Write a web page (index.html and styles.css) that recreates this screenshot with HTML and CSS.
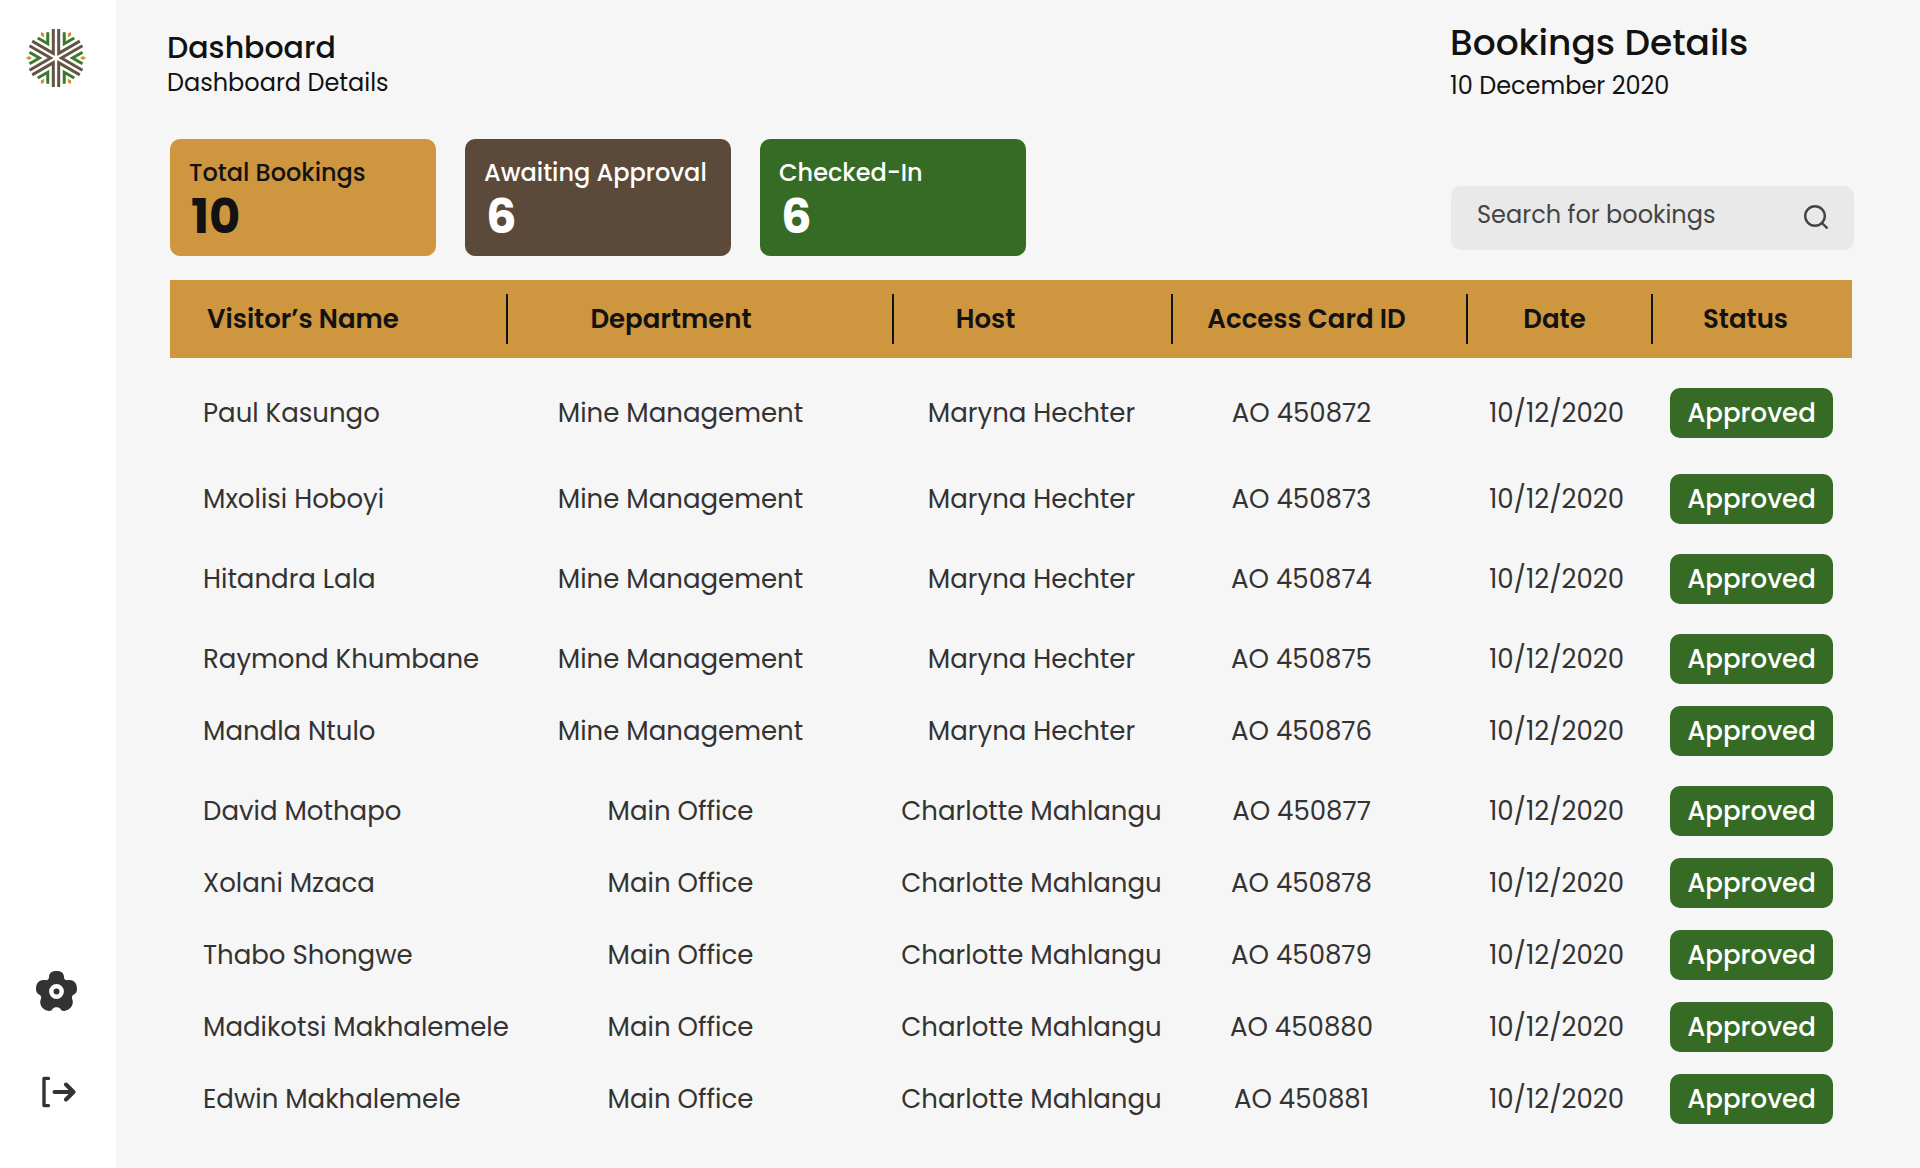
FILE: index.html
```html
<!DOCTYPE html>
<html lang="en">
<head>
<meta charset="utf-8">
<meta name="viewport" content="width=device-width, initial-scale=1">
<title>Bookings Dashboard</title>
<link rel="stylesheet" href="styles.css">
</head>
<body>
<div class="app">
  <nav class="sidebar" aria-label="Main">
    <a class="side-link" href="#home" aria-label="Home">
      <svg width="62" height="62" viewBox="-31 -31 62 62" fill="none" stroke-width="3">
        <defs>
          <g id="sector">
            <path stroke="#655344" d="M26.5-12.2 5.4 0 26.5 12.2"/>
            <path stroke="#3a7a2a" d="M26.5-5.8 16.5 0 26.5 5.8"/>
            <path fill="#d0933a" d="M24 0 27-2 30 0 27 2z"/>
          </g>
        </defs>
        <use href="#sector"/>
        <use href="#sector" transform="rotate(60)"/>
        <use href="#sector" transform="rotate(120)"/>
        <use href="#sector" transform="rotate(180)"/>
        <use href="#sector" transform="rotate(240)"/>
        <use href="#sector" transform="rotate(300)"/>
      </svg>
    </a>
    <div class="side-bottom">
      <a class="side-link" href="#settings" aria-label="Settings">
        <svg width="41" height="40" viewBox="0 0 41 40">
          <path fill="#333" d="M13 6.500C13 1.500 16 0 20.500 0S28 1.500 28 6.500C28.300 9 30 9.600 32.500 9.100C37.500 8.200 41 12 41 18C41 21.500 39.500 22.700 37.500 23.700C35.500 25 35.500 27 36.500 29C38 34 34 39.500 28 40C26 40 25 39 24.500 38C23 35.500 18 35.500 16.500 38C16 39 15 40 13 40C7 39.500 3 34 4.500 29C5.500 27 5.500 25 3.500 23.700C1.500 22.700 0 21.500 0 18C0 12 3.500 8.200 8.500 9.100C11 9.600 12.700 9 13 6.500z"/>
          <circle cx="20.500" cy="20.500" r="5.200" fill="#333" stroke="#fff" stroke-width="4.400"/>
        </svg>
      </a>
      <a class="side-link" href="#logout" aria-label="Log out">
        <svg width="40" height="32" viewBox="-6 0 40 32" fill="none" stroke="#333" stroke-linecap="round" stroke-linejoin="round">
          <path stroke-width="3.400" d="M6.500 2.400H2V29.600H6.500"/>
          <path stroke-width="4" d="M12.500 16H31M24 8.500 31.500 16 24 23.500"/>
        </svg>
      </a>
    </div>
  </nav>

  <main class="main">
    <header class="top">
      <div class="titles">
        <h1 class="title">Dashboard</h1>
        <p class="subtitle">Dashboard Details</p>
      </div>
      <div class="details">
        <h2 class="details-title">Bookings Details</h2>
        <p class="details-date">10 December 2020</p>
      </div>
      <div class="cards">
        <section class="card card-gold"><h3 class="card-label">Total Bookings</h3><p class="card-value">10</p></section>
        <section class="card card-brown"><h3 class="card-label">Awaiting Approval</h3><p class="card-value">6</p></section>
        <section class="card card-green"><h3 class="card-label">Checked-In</h3><p class="card-value">6</p></section>
      </div>
      <form class="search">
        <input class="search-input" type="search" placeholder="Search for bookings" aria-label="Search for bookings">
        <button class="search-button" type="submit" aria-label="Search">
          <svg width="24" height="24" viewBox="0 0 24 24" fill="none" stroke="#444" stroke-width="2.400"><circle cx="11" cy="11" r="9.800"/><path d="M18 18 23.500 23.500"/></svg>
        </button>
      </form>
    </header>

    <table class="bookings">
      <colgroup><col class="c-name"><col class="c-dept"><col class="c-host"><col class="c-card"><col class="c-date"><col class="c-status"></colgroup>
      <thead>
        <tr><th scope="col" class="name">Visitor’s Name</th><th scope="col" class="dept">Department</th><th scope="col" class="host">Host</th><th scope="col" class="card-id">Access Card ID</th><th scope="col" class="date">Date</th><th scope="col" class="status">Status</th></tr>
      </thead>
      <tbody>
        <tr class="lead"><td class="name">Paul Kasungo</td><td class="dept">Mine Management</td><td class="host">Maryna Hechter</td><td class="card-id">AO 450872</td><td class="date">10/12/2020</td><td class="status"><span class="pill">Approved</span></td></tr>
        <tr class="loose"><td class="name">Mxolisi Hoboyi</td><td class="dept">Mine Management</td><td class="host">Maryna Hechter</td><td class="card-id">AO 450873</td><td class="date">10/12/2020</td><td class="status"><span class="pill">Approved</span></td></tr>
        <tr class="loose"><td class="name">Hitandra Lala</td><td class="dept">Mine Management</td><td class="host">Maryna Hechter</td><td class="card-id">AO 450874</td><td class="date">10/12/2020</td><td class="status"><span class="pill">Approved</span></td></tr>
        <tr><td class="name">Raymond Khumbane</td><td class="dept">Mine Management</td><td class="host">Maryna Hechter</td><td class="card-id">AO 450875</td><td class="date">10/12/2020</td><td class="status"><span class="pill">Approved</span></td></tr>
        <tr class="loose"><td class="name">Mandla Ntulo</td><td class="dept">Mine Management</td><td class="host">Maryna Hechter</td><td class="card-id">AO 450876</td><td class="date">10/12/2020</td><td class="status"><span class="pill">Approved</span></td></tr>
        <tr><td class="name">David Mothapo</td><td class="dept">Main Office</td><td class="host">Charlotte Mahlangu</td><td class="card-id">AO 450877</td><td class="date">10/12/2020</td><td class="status"><span class="pill">Approved</span></td></tr>
        <tr><td class="name">Xolani Mzaca</td><td class="dept">Main Office</td><td class="host">Charlotte Mahlangu</td><td class="card-id">AO 450878</td><td class="date">10/12/2020</td><td class="status"><span class="pill">Approved</span></td></tr>
        <tr><td class="name">Thabo Shongwe</td><td class="dept">Main Office</td><td class="host">Charlotte Mahlangu</td><td class="card-id">AO 450879</td><td class="date">10/12/2020</td><td class="status"><span class="pill">Approved</span></td></tr>
        <tr><td class="name">Madikotsi Makhalemele</td><td class="dept">Main Office</td><td class="host">Charlotte Mahlangu</td><td class="card-id">AO 450880</td><td class="date">10/12/2020</td><td class="status"><span class="pill">Approved</span></td></tr>
        <tr><td class="name">Edwin Makhalemele</td><td class="dept">Main Office</td><td class="host">Charlotte Mahlangu</td><td class="card-id">AO 450881</td><td class="date">10/12/2020</td><td class="status"><span class="pill">Approved</span></td></tr>
      </tbody>
    </table>
  </main>
</div>
</body>
</html>
```
FILE: styles.css
```css
*,
*::before,
*::after { box-sizing: border-box; }

body {
  margin: 0;
  background: #f6f6f6;
  color: #121212;
  font-family: Poppins, Inter, "Open Sans", sans-serif;
}

h1, h2, h3, p { margin: 0; font-weight: 400; }

.app { display: flex; min-height: 100vh; }

/* Sidebar */
.sidebar {
  flex: none;
  width: 116px;
  padding: 27px 4px 62px 0;
  display: flex;
  flex-direction: column;
  align-items: center;
  justify-content: space-between;
  background: #fff;
}
.side-link { display: block; }
.side-link svg { display: block; }
.side-bottom {
  display: flex;
  flex-direction: column;
  align-items: center;
  gap: 65px;
}

/* Page header */
.main { flex: 1; min-width: 0; padding: 24px 66px 24px 54px; }
.top {
  display: grid;
  grid-template-columns: 1fr 403px;
  column-gap: 24px;
}
.titles { margin-left: -3px; padding-top: 4px; }
.title { font-size: 30px; line-height: 40px; font-weight: 500; }
.subtitle { font-size: 24px; line-height: 30px; }
.details { height: 115px; margin-left: -1px; }
.details-title { font-size: 36px; line-height: 38px; font-weight: 500; }
.details-date { font-size: 24px; line-height: 48px; }

/* Summary cards */
.cards { display: flex; gap: 29px; }
.card {
  width: 266px;
  height: 117px;
  padding: 16px 19px;
  border-radius: 10px;
  color: #fff;
  white-space: nowrap;
}
.card-gold { background: #cd963f; color: #121212; }
.card-brown { background: #5b4939; }
.card-green { background: #366b25; }
.card-label { font-size: 24px; line-height: 36px; font-weight: 500; }
.card-value { padding-left: 2px; font-size: 48px; line-height: 52px; font-weight: 700; }

/* Search */
.search {
  align-self: end;
  height: 64px;
  margin-bottom: 6px;
  padding: 0 26px;
  display: flex;
  align-items: center;
  gap: 12px;
  border-radius: 10px;
  background: #e9e9e9;
}
.search-input {
  flex: 1;
  min-width: 0;
  height: 56px;
  padding: 0 0 8px;
  border: 0;
  background: none;
  color: #444;
  font: inherit;
  font-size: 24px;
}
.search-input::placeholder { color: #444; opacity: 1; }
.search-button { padding: 0 0 2px; border: 0; background: none; cursor: pointer; }
.search-button svg { display: block; }

/* Bookings table */
.bookings {
  width: calc(100% - 2px);
  margin-top: 24px;
  border-collapse: collapse;
  table-layout: fixed;
  font-size: 26px;
  line-height: 50px;
  white-space: nowrap;
}
.c-dept { width: 386px; }
.c-host { width: 279px; }
.c-card { width: 295px; }
.c-date { width: 185px; }
.c-status { width: 199px; }

.bookings th {
  height: 78px;
  padding: 0;
  background: #cd963f linear-gradient(#121212, #121212) no-repeat right center / 2px 50px;
  font-weight: 600;
}
.bookings th:last-child { background-image: none; }

.bookings td {
  height: 72px;
  padding: 0;
  vertical-align: top;
  text-align: center;
  color: #333;
}
.bookings .lead td { height: 86px; }
.bookings .loose td { height: 80px; }
.bookings tbody::before { content: ""; display: table-row; height: 30px; }

.bookings .name { padding-left: 33px; text-align: left; }
.bookings th.name { padding-left: 37px; }
.bookings th.dept { padding-right: 60px; }
.bookings td.dept { padding-right: 41px; }
.bookings th.host { padding-right: 96px; }
.bookings td.host { padding-right: 4px; }
.bookings th.card-id { padding-right: 28px; }
.bookings td.card-id { padding-right: 38px; }
.bookings th.date { padding-right: 12px; }
.bookings td.date { padding-right: 8px; }
.bookings th.status { padding-right: 14px; }
.bookings td.status { padding-right: 2px; }

.bookings .pill {
  display: block;
  width: 163px;
  margin: 0 auto;
  border-radius: 10px;
  background: #366b25;
  color: #fff;
  font-weight: 500;
}
```
